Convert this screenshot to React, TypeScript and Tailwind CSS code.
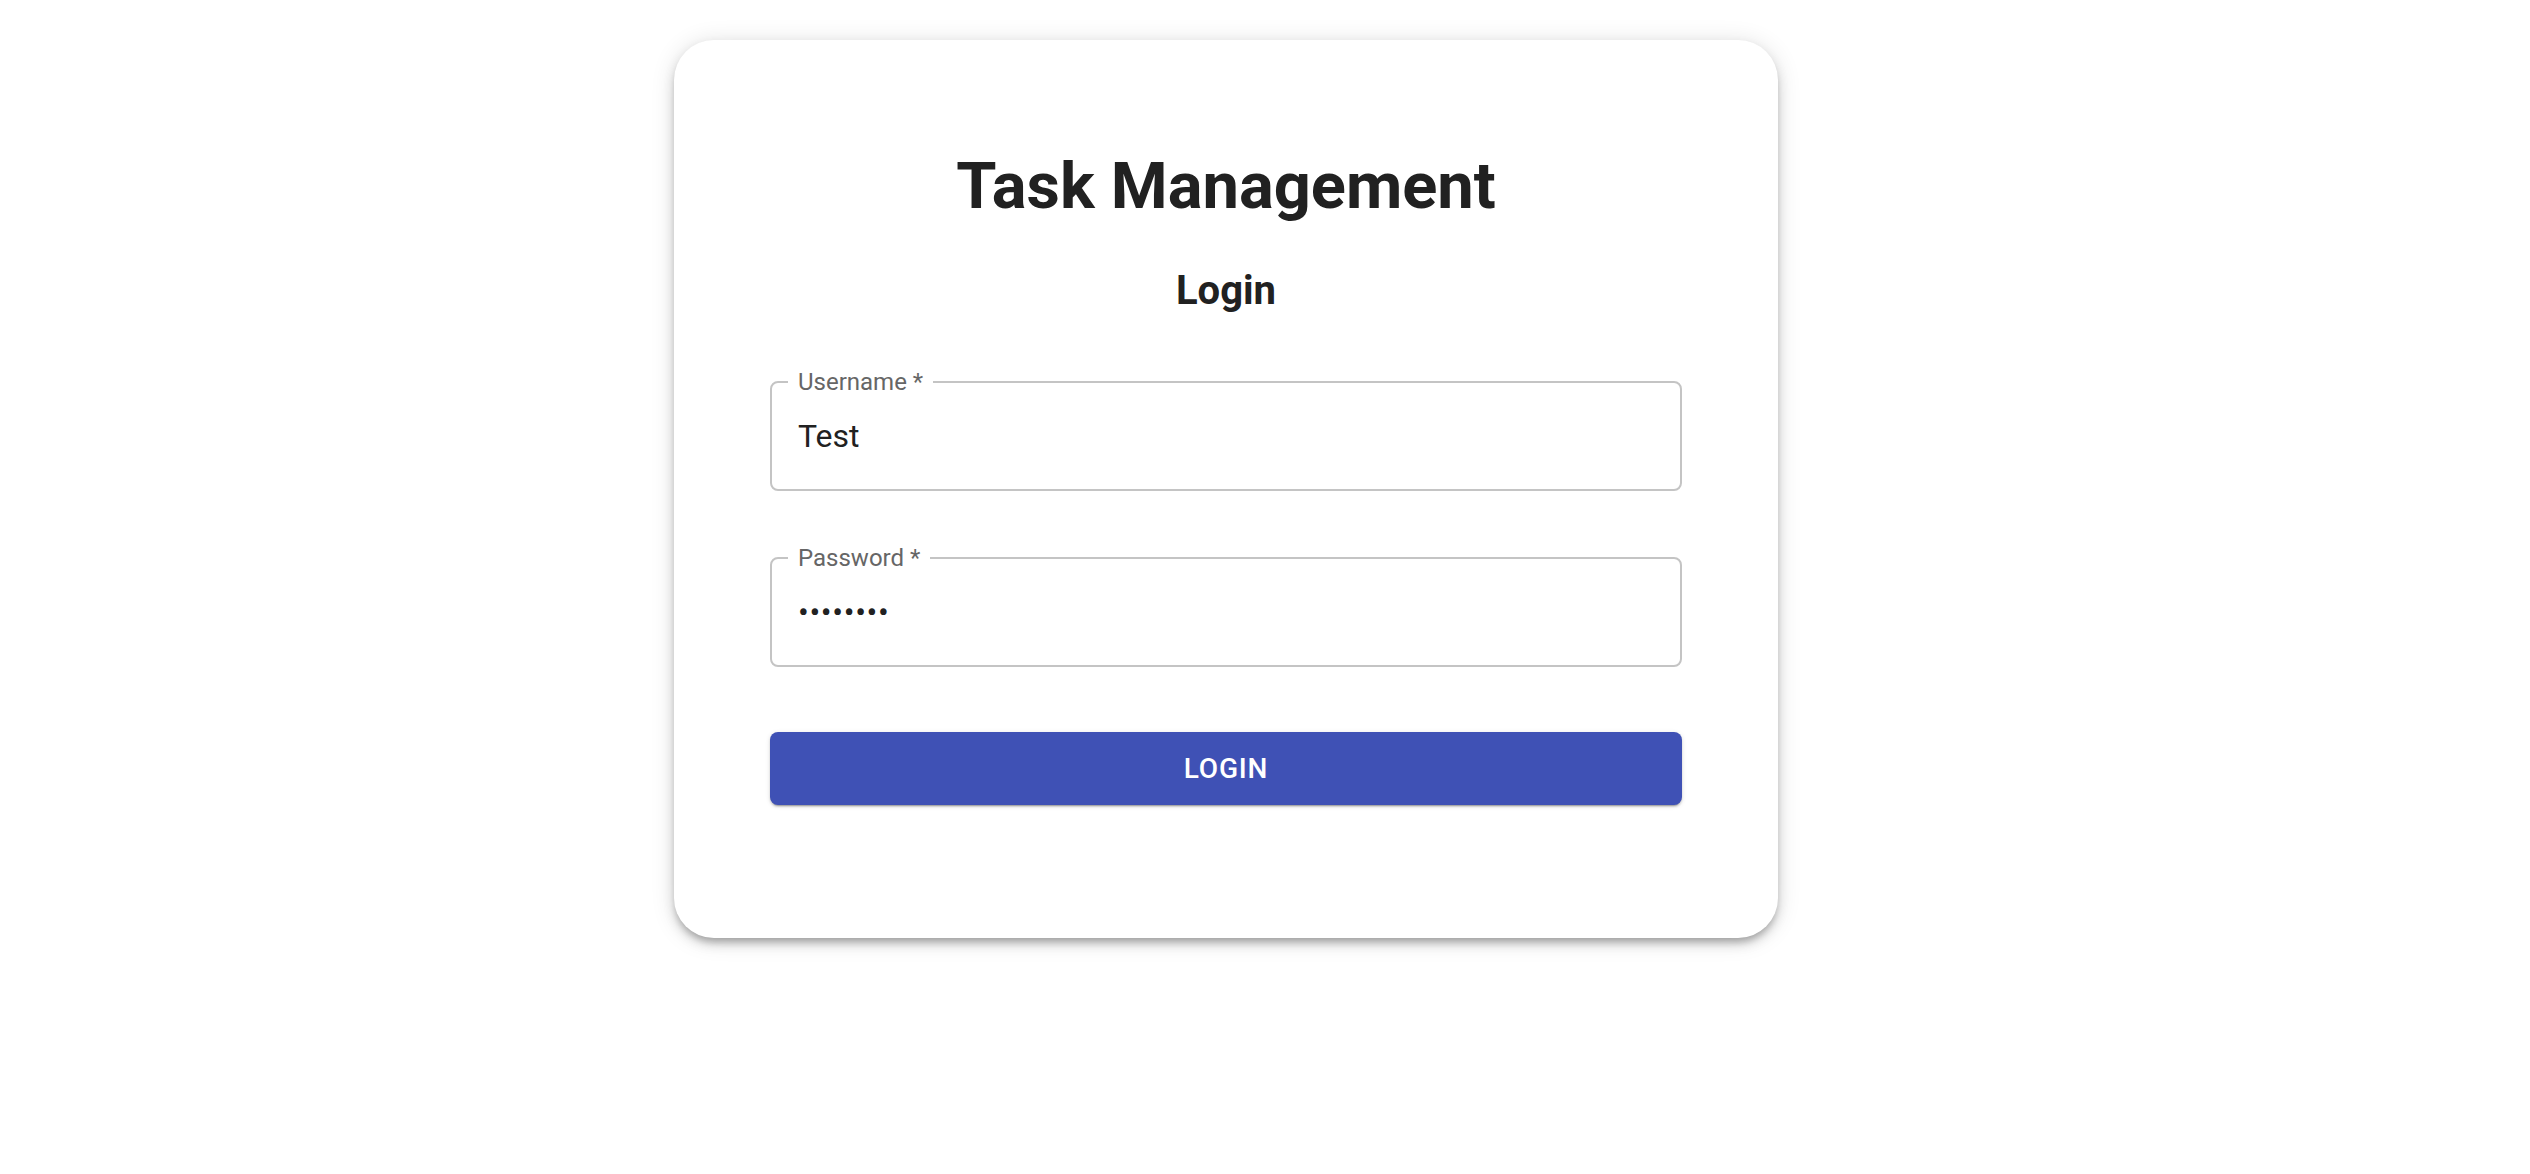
import React, { useState } from 'react';

const font = { fontFamily: 'Roboto, "Helvetica Neue", Arial, sans-serif' };

function OutlinedField({
  label,
  value,
  type = 'text',
  onChange,
}: {
  label: string;
  value: string;
  type?: string;
  onChange: (v: string) => void;
}) {
  return (
    <div className="relative h-[110px] w-full rounded-[8px] border-2 border-[#c4c4c4]">
      <label className="absolute -top-[15px] left-[16px] bg-white px-[10px] text-[24px] leading-[28px] text-[#666666]">
        {label} *
      </label>
      <input
        type={type}
        value={value}
        onChange={(e) => onChange(e.target.value)}
        className="h-full w-full rounded-[8px] bg-transparent px-[26px] text-[32px] text-[#212121] outline-none"
        style={type === 'password' ? { letterSpacing: '0.02em' } : undefined}
      />
    </div>
  );
}

export default function App() {
  const [username, setUsername] = useState('Test');
  const [password, setPassword] = useState('password');

  return (
    <div className="min-h-screen bg-white pl-[674px] pt-[40px]" style={font}>
      <div className="flex h-[898px] w-[1104px] flex-col rounded-[40px] bg-white px-[96px] pt-[106px] shadow-[0_6px_6px_-2px_rgba(0,0,0,0.2),0_6px_12px_0_rgba(0,0,0,0.14),0_2px_24px_0_rgba(0,0,0,0.12)]">
        <h1 className="text-center text-[65px] font-bold leading-[80px] text-[#212121]">
          Task Management
        </h1>
        <h2 className="mt-[41px] text-center text-[40px] font-bold leading-[48px] text-[#212121]">
          Login
        </h2>

        <div className="mt-[66px]">
          <OutlinedField label="Username" value={username} onChange={setUsername} />
        </div>
        <div className="mt-[66px]">
          <OutlinedField label="Password" value={password} type="password" onChange={setPassword} />
        </div>

        <button className="mt-[65px] h-[73px] w-full rounded-[8px] bg-[#3f51b5] text-[28px] font-medium uppercase tracking-[0.8px] text-white shadow-[0_3px_1px_-2px_rgba(0,0,0,0.2),0_2px_2px_0_rgba(0,0,0,0.14),0_1px_5px_0_rgba(0,0,0,0.12)]">
          Login
        </button>
      </div>
    </div>
  );
}
